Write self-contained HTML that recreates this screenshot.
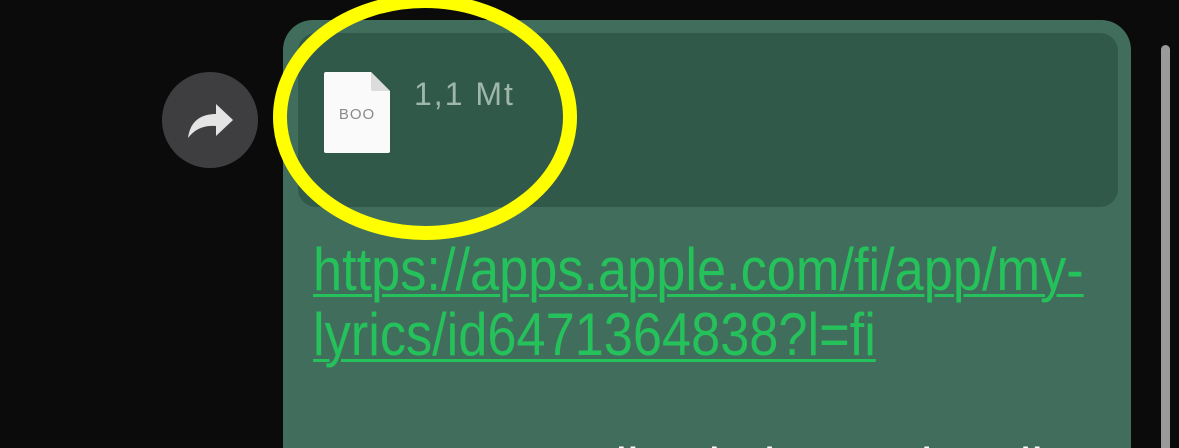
<!DOCTYPE html>
<html><head><meta charset="utf-8"><style>
html,body{margin:0;padding:0;width:1179px;height:448px;overflow:hidden}
body{background:#0b0b0b;position:relative;font-family:"Liberation Sans",sans-serif}
.bubble{position:absolute;left:283px;top:20px;width:848px;height:428px;background:#416e5c;border-radius:30px 30px 0 0}
.inner{position:absolute;left:298px;top:33px;width:820px;height:174px;background:#31594a;border-radius:18px}
.fwd{position:absolute;left:162px;top:72px;width:96px;height:96px;border-radius:50%;background:#3e3e40}
.doc{position:absolute;left:324px;top:72px;width:66px;height:81px}
.size{position:absolute;left:414px;top:76px;color:#9fb6ab;font-size:32px;letter-spacing:2px}
.clip{position:absolute;left:283px;top:220px;width:848px;height:228px;overflow:hidden}
.link{position:absolute;left:30px;top:17px;color:#25c15a;font-size:60px;line-height:65px;text-decoration:underline;text-decoration-thickness:3px;text-underline-offset:4px;white-space:nowrap;transform:scaleX(0.872);transform-origin:0 0}
.txt{position:absolute;left:30px;top:220px;color:#fff;font-size:60px;line-height:60px;white-space:nowrap;transform:scaleX(0.872);transform-origin:0 0}
.scroll{position:absolute;left:1161px;top:45px;width:9px;height:403px;border-radius:5px 5px 0 0;background:#9a9a9a}
svg.ring{position:absolute;left:0;top:0}
</style></head><body>
<div class="bubble"></div>
<div class="inner"></div>
<div class="fwd"><svg width="96" height="96" viewBox="0 0 96 96"><path d="M26 66 C28 50 38 42 54 42 L54 32 L71 48 L54 64 L54 54 C42 53 33 57 26 66 Z" fill="#e4e4e4"/></svg></div>
<svg class="doc" viewBox="0 0 66 81"><path d="M2 0 H47 L66 19 V79 Q66 81 64 81 H2 Q0 81 0 79 V2 Q0 0 2 0Z" fill="#fafafa"/><path d="M47 0 V17 Q47 19 49 19 H66Z" fill="#dcdcdc"/><text x="33" y="47" text-anchor="middle" font-family="Liberation Sans" font-size="15" fill="#8a8a8a" letter-spacing="1">BOO</text></svg>
<div class="size">1,1 Mt</div>
<div class="clip">
<div class="link">https://apps.apple.com/fi/app/my-<br>lyrics/id6471364838?l=fi</div>
<div class="txt">Asenna sovellus ja kuuntele tällä</div>
</div>
<div class="scroll"></div>
<svg class="ring" width="1179" height="448"><ellipse cx="425" cy="117" rx="145" ry="116" fill="none" stroke="#ffff00" stroke-width="14"/></svg>
</body></html>
